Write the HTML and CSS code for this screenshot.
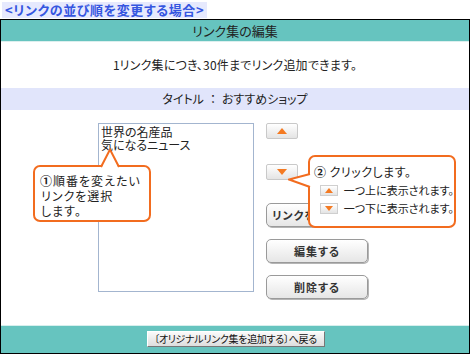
FILE: index.html
```html
<!DOCTYPE html>
<html lang="ja">
  <head>
    <meta charset="UTF-8" />
    <title>リンクの並び順を変更する場合</title>
    <link rel="stylesheet" href="styles.css">
  </head>
  <body>
    <div class="page-title">&lt;リンクの並び順を変更する場合&gt;</div>
    <div class="frame">
      <div class="frame-head">リンク集の編集</div>
      <div class="note">1リンク集につき、30件までリンク追加できます。</div>
      <div class="title-band">タイトル<span class="colon">：</span>おすすめショップ</div>
      <div class="editor">
        <div class="link-list">
          <div>世界の名産品</div>
          <div>気になるニュース</div>
        </div>
        <div class="controls">
          <button class="arrow-btn"><span class="tri-up"></span></button>
          <button class="arrow-btn down"><span class="tri-down"></span></button>
          <button class="action-btn first">リンクを追加する</button>
          <button class="action-btn">編集する</button>
          <button class="action-btn">削除する</button>
        </div>
      </div>
      <div class="frame-foot">
        <button class="back-btn">〔オリジナルリンク集を追加する〕へ戻る</button>
      </div>

      <!-- callouts over the form -->
      <div class="callout callout-select">
        <svg class="tail tail-up" width="22" height="21" viewBox="0 0 22 21">
          <polygon points="2,21 11,1 20,21" fill="#fff" />
          <polyline points="2,19 11,1.5 20,19" fill="none" stroke="#f26c1f" stroke-width="2" />
        </svg>
        <div class="callout-text"><span class="num">①</span>順番を変えたい</div>
        <div class="callout-text indent">リンクを選択</div>
        <div class="callout-text indent">します。</div>
      </div>
      <div class="callout callout-click">
        <svg class="tail tail-left" width="24" height="18" viewBox="0 0 24 18">
          <polygon points="24,2 1,7 24,15" fill="#fff" />
          <polyline points="22,2 1,7.5 22,15" fill="none" stroke="#f26c1f" stroke-width="2" />
        </svg>
        <div class="click-title"><span class="num">②</span> クリックします。</div>
        <div class="legend-row"><span class="mini-btn"><span class="tri-up small"></span></span>一つ上に表示されます。</div>
        <div class="legend-row"><span class="mini-btn"><span class="tri-down small"></span></span>一つ下に表示されます。</div>
      </div>
    </div>
  </body>
</html>
```

FILE: styles.css
```css
* {
  box-sizing: border-box;
}
body {
  margin: 0;
  font-family: "Noto Sans CJK JP", "DejaVu Sans", sans-serif;
  font-feature-settings: "palt";
  font-size: 12px;
  color: #222;
  background: #fff;
  white-space: nowrap;
}
.page-title {
  display: inline-block;
  margin: 2px 0 0 2px;
  padding: 0 3px;
  height: 16px;
  line-height: 16px;
  font-size: 13px;
  font-weight: bold;
  letter-spacing: 0.6px;
  color: #3556e0;
  background: #e6e9fd;
}
.frame {
  position: relative;
  width: 470px;
  height: 335px;
  margin-top: 1px;
  border: 1px solid #000;
  display: flex;
  flex-direction: column;
}
.frame-head {
  height: 22px;
  line-height: 21px;
  text-align: center;
  font-size: 13px;
  color: #222;
  background: #66c4bf;
  border-bottom: 1px solid #dcefee;
}
.note {
  height: 46px;
  line-height: 46px;
  text-align: center;
  letter-spacing: 0.2px;
}
.title-band {
  height: 22px;
  line-height: 22px;
  text-align: center;
  background: #e1e5fb;
}
.colon {
  margin: 0 6px;
}
.editor {
  height: 215px;
  display: flex;
  padding: 13px 0 0 97px;
}
.link-list {
  width: 156px;
  height: 169px;
  border: 1px solid #a3b5cf;
  padding: 1px 2px;
  line-height: 13px;
}
.controls {
  margin-left: 12px;
  display: flex;
  flex-direction: column;
  align-items: flex-start;
}
.arrow-btn {
  width: 32px;
  height: 16px;
  padding: 0;
  border: 1px solid #c9c9c9;
  border-radius: 2px;
  background: linear-gradient(#ffffff, #e4e4e4);
  display: flex;
  align-items: center;
  justify-content: center;
}
.arrow-btn.down {
  margin-top: 25px;
}
.tri-up {
  width: 0;
  height: 0;
  border-left: 5px solid transparent;
  border-right: 5px solid transparent;
  border-bottom: 6px solid #f47a22;
}
.tri-down {
  width: 0;
  height: 0;
  border-left: 5px solid transparent;
  border-right: 5px solid transparent;
  border-top: 6px solid #f47a22;
}
.tri-up.small {
  border-left-width: 4px;
  border-right-width: 4px;
  border-bottom-width: 5px;
}
.tri-down.small {
  border-left-width: 4px;
  border-right-width: 4px;
  border-top-width: 5px;
}
.action-btn {
  width: 102px;
  height: 24px;
  margin-top: 12px;
  padding: 0;
  border: 1px solid #9a9a9a;
  border-radius: 5px;
  background: linear-gradient(#ffffff, #e6e6e6);
  box-shadow: 1px 1px 0 #b5b5b5;
  font-family: inherit;
  font-feature-settings: "palt";
  font-size: 11px;
  font-weight: bold;
  letter-spacing: 1px;
  color: #333;
  white-space: nowrap;
  overflow: hidden;
}
.action-btn.first {
  margin-top: 23px;
}
.frame-foot {
  flex: 1;
  background: #66c4bf;
  border-top: 1px solid #d6efed;
  display: flex;
  justify-content: center;
  padding-top: 5px;
}
.back-btn {
  width: 178px;
  height: 16px;
  margin-left: 1px;
  padding: 0;
  border: 1px solid #8c8c8c;
  border-color: #fff #777 #777 #fff;
  background: linear-gradient(#fafafa, #dedede);
  font-family: inherit;
  font-feature-settings: "palt";
  font-size: 10px;
  letter-spacing: -0.3px;
  line-height: 14px;
  color: #111;
  white-space: nowrap;
}
.callout {
  position: absolute;
  background: #fff;
  border: 2px solid #f26c1f;
  border-radius: 7px;
}
.tail {
  position: absolute;
  display: block;
}
.callout-select {
  left: 32px;
  top: 145px;
  width: 118px;
  height: 57px;
  padding: 6px 0 0 5px;
}
.tail-up {
  left: 64px;
  top: -19px;
}
.callout-text {
  height: 15px;
  line-height: 15px;
  font-size: 12px;
  letter-spacing: 1px;
}
.callout-text.indent {
  padding-left: 1px;
}
.num {
  font-size: 12px;
  font-weight: bold;
}
.callout-click {
  left: 307px;
  top: 135px;
  width: 148px;
  height: 73px;
  padding: 6px 0 0 4px;
}
.tail-left {
  left: -22px;
  top: 15px;
}
.click-title {
  height: 18px;
  line-height: 18px;
  font-size: 12px;
  letter-spacing: 0.5px;
}
.legend-row {
  display: flex;
  align-items: center;
  height: 18px;
  font-size: 11px;
}
.legend-row:first-of-type {
  margin-top: 5px;
}
.mini-btn {
  width: 22px;
  height: 11px;
  margin: 0 6px 0 6px;
  border: 1px solid #cfcfcf;
  background: linear-gradient(#ffffff, #e4e4e4);
  display: flex;
  align-items: center;
  justify-content: center;
}
```
